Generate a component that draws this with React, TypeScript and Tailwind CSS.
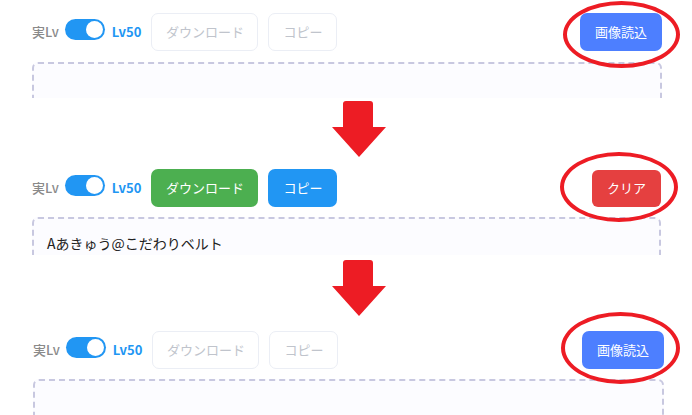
import React from "react";

const font = { fontFamily: '"Noto Sans CJK JP", "Noto Sans", sans-serif' };

function Toggle() {
  return (
    <span className="relative inline-flex h-[21px] w-[40px] shrink-0 items-center rounded-full bg-[#2196f3]">
      <span className="absolute right-[2px] h-[17px] w-[17px] rounded-full bg-white" />
    </span>
  );
}

function Toolbar({ active }: { active: boolean }) {
  return (
    <div className="flex h-[38px] items-center">
      <span className="text-[13px] font-medium text-[#8a8a8a]">実Lv</span>
      <span className="ml-[6px]">
        <Toggle />
      </span>
      <span className="ml-[7px] text-[13px] font-semibold text-[#2196f3]">Lv50</span>
      {active ? (
        <>
          <button className="ml-[10px] flex h-[38px] w-[107px] items-center justify-center rounded-[7px] bg-[#4caf50] text-[13px] text-white">
            ダウンロード
          </button>
          <button className="ml-[10px] flex h-[38px] w-[69px] items-center justify-center rounded-[7px] bg-[#2196f3] text-[13px] text-white">
            コピー
          </button>
        </>
      ) : (
        <>
          <button className="ml-[10px] flex h-[38px] w-[107px] items-center justify-center rounded-[7px] border border-[#ebeef5] bg-white text-[13px] text-[#c0c4cc]">
            ダウンロード
          </button>
          <button className="ml-[10px] flex h-[38px] w-[69px] items-center justify-center rounded-[7px] border border-[#ebeef5] bg-white text-[13px] text-[#c0c4cc]">
            コピー
          </button>
        </>
      )}
      <div className="flex-1" />
      {active ? (
        <button className="flex h-[37px] w-[69px] items-center justify-center rounded-[6px] bg-[#e54040] text-[13px] text-white">
          クリア
        </button>
      ) : (
        <button className="flex h-[38px] w-[82px] items-center justify-center rounded-[7px] bg-[#4d7fff] text-[13px] text-white">
          画像読込
        </button>
      )}
    </div>
  );
}

function Arrow() {
  return (
    <svg width="56" height="57" viewBox="0 0 56 57" className="block">
      <path d="M12 3 Q12 0 15 0 H39 Q42 0 42 3 V26 H55 L28 56 L1 26 H12 Z" fill="#ed1c24" />
    </svg>
  );
}

function Ellipse({ className }: { className: string }) {
  return <div className={"pointer-events-none absolute rounded-[50%] border-4 border-[#ed1c24] " + className} />;
}

export default function App() {
  return (
    <div className="relative h-[415px] w-[692px] overflow-hidden bg-white" style={font}>
      {/* screenshot 1 */}
      <div className="h-[98px] pl-[32px] pr-[30px] pt-[13px]">
        <Toolbar active={false} />
        <div className="mt-[11px] h-[36px] rounded-t-[6px] border-2 border-b-0 border-dashed border-[#c8c8e0] bg-[#fcfcff]" />
      </div>

      <div className="h-[71px] pl-[331px] pt-[3px]">
        <Arrow />
      </div>

      {/* screenshot 2 */}
      <div className="h-[86px] pl-[32px] pr-[31px]">
        <Toolbar active={true} />
        <div className="mt-[10px] h-[38px] rounded-t-[6px] border-2 border-b-0 border-dashed border-[#c8c8e0] bg-[#fcfcff] pl-[13px] pt-[14px] text-[14px] leading-[20px] text-[#222]">
          Aあきゅう@こだわりベルト
        </div>
      </div>

      <div className="h-[76px] pl-[331px] pt-[5px]">
        <Arrow />
      </div>

      {/* screenshot 3 */}
      <div className="pl-[33px] pr-[28px]">
        <Toolbar active={false} />
        <div className="mt-[10px] h-[40px] rounded-t-[6px] border-2 border-b-0 border-dashed border-[#c8c8e0] bg-[#fcfcff]" />
      </div>

      <Ellipse className="left-[563px] top-[1px] h-[67px] w-[117px]" />
      <Ellipse className="left-[560px] top-[152px] h-[70px] w-[118px]" />
      <Ellipse className="left-[561px] top-[312px] h-[72px] w-[119px]" />
    </div>
  );
}
